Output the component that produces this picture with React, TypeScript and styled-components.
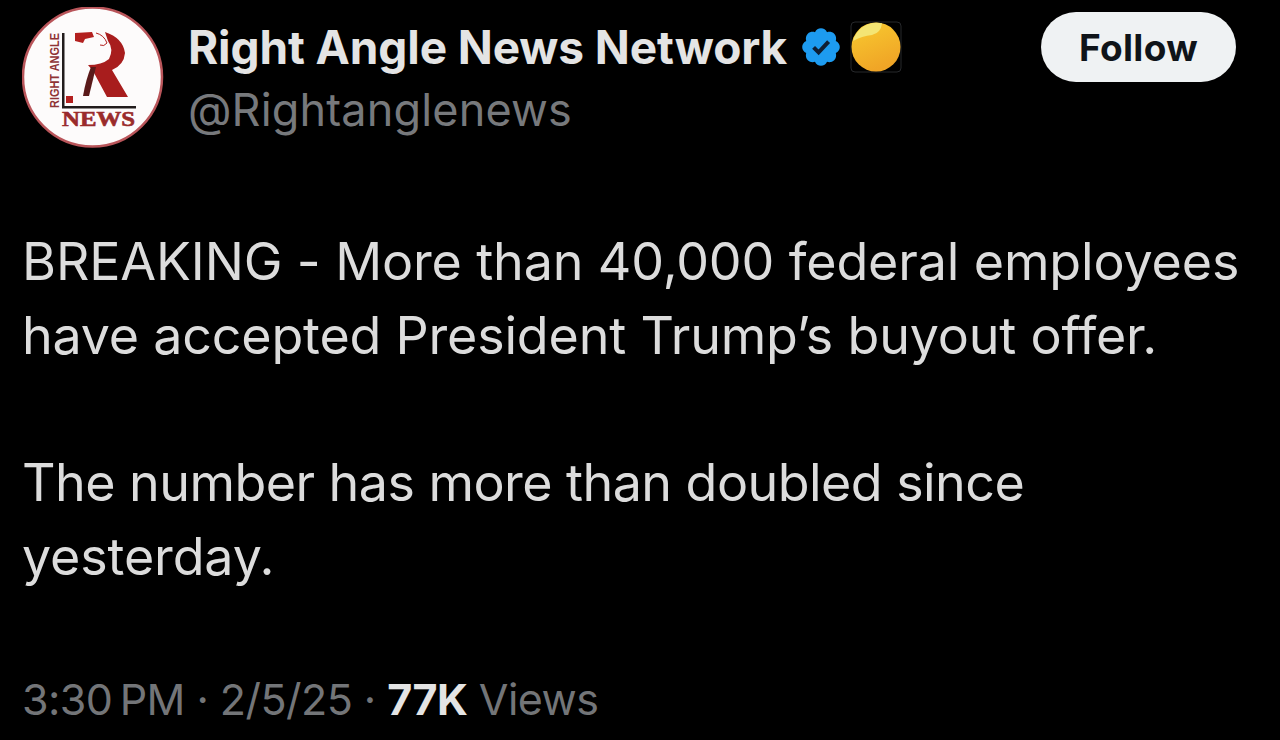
import React from "react";
import styled, { createGlobalStyle } from "styled-components";

const GlobalStyle = createGlobalStyle`
  html, body {
    margin: 0;
    padding: 0;
    background: #000;
  }
`;

const SPage = styled.div`
  width: 1280px;
  height: 740px;
  box-sizing: border-box;
  padding: 7px 44px 0 22px;
  background: #000;
  font-family: Inter, Roboto, sans-serif;
  overflow: hidden;
`;

const SHeader = styled.div`
  display: flex;
  align-items: flex-start;
`;

const SAvatar = styled.svg`
  width: 142px;
  height: 142px;
  flex: none;
`;

const SNames = styled.div`
  flex: 1;
  margin-left: 24px;
  padding-top: 15px;
`;

const SNameRow = styled.div`
  display: flex;
  align-items: center;
  height: 50px;
`;

const SName = styled.span`
  font-size: 46px;
  font-weight: 700;
  line-height: 50px;
  letter-spacing: -0.1px;
  color: #e4e4e4;
`;

const SHandle = styled.div`
  font-size: 45px;
  line-height: 50px;
  margin-top: 13px;
  letter-spacing: 0.15px;
  color: #77797c;
`;

const SVerified = styled.svg`
  width: 44px;
  height: 44px;
  margin-left: 12px;
  flex: none;
`;

const SCoin = styled.svg`
  width: 52px;
  height: 52px;
  margin-left: 7px;
  flex: none;
`;

const SFollow = styled.button`
  width: 195px;
  height: 70px;
  margin-top: 5px;
  padding: 0;
  border: 0;
  border-radius: 35px;
  background: #eff2f3;
  color: #0f1419;
  font-family: inherit;
  font-size: 37px;
  font-weight: 700;
  letter-spacing: 0.3px;
  flex: none;
`;

const SBody = styled.div`
  margin-top: 76px;
  font-size: 52px;
  line-height: 74px;
  color: #dcdcdc;
`;

const SLine = styled.div<{ $spacing: number }>`
  white-space: nowrap;
  letter-spacing: ${(p) => p.$spacing}px;
`;

const SGap = styled.div`
  height: 73px;
`;

const SMeta = styled.div`
  margin-top: 80px;
  font-size: 43px;
  line-height: 50px;
  letter-spacing: -0.55px;
  color: #737578;
  white-space: nowrap;
`;

const SStrong = styled.span`
  font-weight: 700;
  color: #e4e4e4;
`;

const Logo = () => (
  <SAvatar viewBox="0 0 142 142">
    <circle cx="70.500" cy="70" r="69.500" fill="#fdfbfb" stroke="#b9555a" strokeWidth="2.500" />
    <path d="M53 26 L70 25 L72 30 L63 32 L61 36 L53 34 Z" fill="#b3201f" />
    <path
      d="M83 25 Q101 31 103 46 Q102 58 90 63 L106 90 L85 90 L71 64 L66 58 Q80 58 87 52 Q92 42 86 34 Z"
      fill="#a81d1d"
    />
    <path d="M74 26 Q82 28 85 36 Q82 40 78 38" fill="none" stroke="#b3201f" strokeWidth="1" />
    <path d="M69 60 L74 60 L67 89 L61 89 Q64 72 69 60 Z" fill="#5a1a1a" />
    <rect x="40" y="26" width="2.500" height="75" fill="#221c1c" />
    <rect x="40" y="99" width="74" height="2.500" fill="#221c1c" />
    <rect x="44" y="89" width="7" height="7" fill="#b3201f" />
    <text
      transform="translate(37 101) rotate(-90)"
      fontFamily="Liberation Sans, sans-serif"
      fontSize="12.500"
      fontWeight="700"
      fill="#8f3335"
      textLength="75"
      lengthAdjust="spacingAndGlyphs"
    >
      RIGHT ANGLE
    </text>
    <text
      x="40"
      y="119"
      fontFamily="Liberation Serif, serif"
      fontSize="21"
      fontWeight="700"
      fill="#9a2b2b"
      stroke="#9a2b2b"
      strokeWidth="0.6"
      textLength="73"
      lengthAdjust="spacingAndGlyphs"
    >
      NEWS
    </text>
  </SAvatar>
);

const Verified = () => (
  <SVerified viewBox="0 0 22 22">
    <path
      fill="#1d9bf0"
      d="M20.400 11c0-1.300-.8-2.500-2-3 .4-1.300.1-2.700-.8-3.600-.9-.9-2.300-1.200-3.600-.8-.5-1.200-1.700-2-3-2s-2.500.8-3 2c-1.300-.4-2.700-.1-3.600.8-.9.9-1.200 2.300-.8 3.600-1.200.5-2 1.700-2 3s.8 2.500 2 3c-.4 1.300-.1 2.700.8 3.600.9.9 2.300 1.200 3.600.8.5 1.200 1.700 2 3 2s2.500-.8 3-2c1.300.4 2.700.1 3.600-.8.9-.9 1.200-2.300.8-3.600 1.200-.5 2-1.700 2-3z"
    />
    <path d="M7.300 11.200l2.500 2.500 5-5.400" fill="none" stroke="#0f1e33" strokeWidth="2" />
  </SVerified>
);

const Coin = () => (
  <SCoin viewBox="0 0 52 52">
    <defs>
      <linearGradient id="coin" x1="0" y1="0" x2="0.4" y2="1">
        <stop offset="0" stopColor="#f8cb30" />
        <stop offset="1" stopColor="#f0a526" />
      </linearGradient>
    </defs>
    <rect x="1" y="1" width="50" height="50" rx="4" fill="#000" stroke="#26282b" strokeWidth="1" />
    <circle cx="26" cy="26" r="24.500" fill="url(#coin)" />
    <path d="M3 20 A24.500 24.500 0 0 1 32 2.300 Q31 12 22 14 Q12 15 3 20 Z" fill="#f4e574" />
  </SCoin>
);

export default function App() {
  return (
    <SPage>
      <GlobalStyle />
      <SHeader>
        <Logo />
        <SNames>
          <SNameRow>
            <SName>Right Angle News Network</SName>
            <Verified />
            <Coin />
          </SNameRow>
          <SHandle>@Rightanglenews</SHandle>
        </SNames>
        <SFollow>Follow</SFollow>
      </SHeader>
      <SBody>
        <SLine $spacing={-0.14}>BREAKING - More than 40,000 federal employees</SLine>
        <SLine $spacing={-0.2}>have accepted President Trump’s buyout offer.</SLine>
        <SGap />
        <SLine $spacing={-0.55}>The number has more than doubled since</SLine>
        <SLine $spacing={-0.14}>yesterday.</SLine>
      </SBody>
      <SMeta>
        3:30&#8201;PM · 2/5/25 · <SStrong>77K</SStrong> Views
      </SMeta>
    </SPage>
  );
}
